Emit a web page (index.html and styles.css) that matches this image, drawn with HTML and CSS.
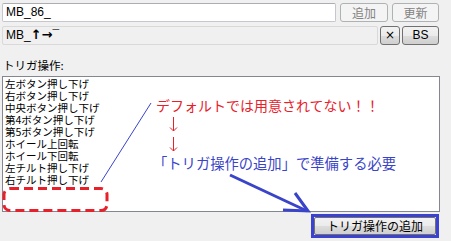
FILE: index.html
```html
<!DOCTYPE html>
<html lang="ja">
<head>
    <meta charset="UTF-8">
    <title>トリガ操作</title>
    <link rel="stylesheet" href="styles.css">
</head>
<body>
    <div class="window">
        <div class="row row-top">
            <div class="field field-main">MB_86_</div>
            <button class="btn btn-add" disabled>追加</button>
            <button class="btn btn-update" disabled>更新</button>
        </div>
        <div class="row row-keys">
            <div class="field field-keys">MB_<b>↑→</b>¯</div>
            <button class="btn btn-x">×</button>
            <button class="btn btn-bs">BS</button>
        </div>
        <div class="label">トリガ操作:</div>
        <ul class="list">
            <li>左ボタン押し下げ</li>
            <li>右ボタン押し下げ</li>
            <li>中央ボタン押し下げ</li>
            <li>第4ボタン押し下げ</li>
            <li>第5ボタン押し下げ</li>
            <li>ホイール上回転</li>
            <li>ホイール下回転</li>
            <li>左チルト押し下げ</li>
            <li>右チルト押し下げ</li>
        </ul>
        <div class="footer">
            <span class="highlight"><button class="btn btn-trigger">トリガ操作の追加</button></span>
        </div>

        <!-- annotations drawn over the dialog -->
        <div class="note note-red">デフォルトでは用意されてない！！</div>
        <div class="note note-blue">「トリガ操作の追加」で準備する必要</div>
        <svg class="marks" width="451" height="241" viewBox="0 0 451 241">
            <line x1="151" y1="103" x2="101" y2="182" stroke="#3a44c8" stroke-width="1"/>
            <path d="M173.5 117 V131 M170 127.5 L173.5 131 L177 127.5" stroke="#e8202a" fill="none"/>
            <path d="M173.5 137 V151 M170 147.5 L173.5 151 L177 147.5" stroke="#e8202a" fill="none"/>
            <rect x="4" y="188.5" width="103" height="22" rx="6" fill="none" stroke="#e8202a" stroke-width="3" stroke-dasharray="9 5"/>
            <line x1="230" y1="175" x2="307" y2="211" stroke="#3a44c8" stroke-width="3"/>
            <path d="M295 193 L308 211 L283 210" stroke="#3a44c8" stroke-width="3" fill="none"/>
        </svg>
    </div>
</body>
</html>
```
FILE: styles.css
```css
body {
    margin: 0;
    background: #f0f0f0;
    font-family: "Noto Sans CJK JP", "Liberation Sans", sans-serif;
    font-size: 12px;
    color: #000;
}
.window {
    position: relative;
    width: 451px;
    height: 241px;
    padding: 3px 0 0 2px;
    box-sizing: border-box;
}
.row {
    display: flex;
    height: 19px;
}
.row-top {
    gap: 4px;
}
.row-keys {
    margin-top: 4px;
    gap: 2px;
}
.field {
    box-sizing: border-box;
    height: 19px;
    border: 1px solid #c4c7cc;
    border-top-color: #abadb3;
    border-radius: 2px;
    background: #fff;
    padding: 0 3px;
    font-family: "Liberation Sans", "Noto Sans CJK JP", sans-serif;
    font-size: 12px;
    line-height: 17px;
}
.field-main {
    width: 334px;
}
.field-keys {
    width: 376px;
    background: #f0f0f0;
    border-color: #d9d9d9;
}
.field-keys b {
    font-family: "DejaVu Sans", sans-serif;
    font-size: 13px;
    line-height: 15px;
}
.btn {
    box-sizing: border-box;
    height: 19px;
    padding: 0;
    border: 1px solid #707070;
    border-radius: 3px;
    background: linear-gradient(#f2f2f2 0%, #ebebeb 50%, #dddddd 51%, #cfcfcf 100%);
    font-family: "Noto Sans CJK JP", sans-serif;
    font-size: 12px;
    line-height: 17px;
    color: #000;
}
.btn:disabled {
    background: #f4f4f4;
    border-color: #adb2b5;
    color: #838383;
}
.btn-add {
    width: 48px;
}
.btn-update {
    width: 47px;
}
.btn-x {
    width: 20px;
    font-family: "DejaVu Sans", sans-serif;
    font-size: 12px;
}
.btn-bs {
    width: 37px;
    font-family: "Liberation Sans", sans-serif;
}
.label {
    margin-top: 13px;
    height: 14px;
    line-height: 14px;
    padding-left: 1px;
    font-size: 11.5px;
}
.list {
    list-style: none;
    margin: 4px 0 0;
    padding: 1px 2px 0;
    box-sizing: border-box;
    width: 438px;
    height: 136px;
    background: #fff;
    border: 1px solid #828790;
}
.list li {
    height: 12px;
    line-height: 12px;
    font-size: 10.5px;
}
.footer {
    display: flex;
    justify-content: flex-end;
    width: 437px;
    margin-top: 2px;
}
.highlight {
    display: block;
    border: 3px solid #3b42cf;
}
.btn-trigger {
    display: block;
    width: 122px;
    height: 18px;
    border-color: #707070;
    border-radius: 2px;
    line-height: 16px;
}
.note {
    position: absolute;
    font-size: 14px;
    line-height: 16px;
    white-space: nowrap;
}
.note-red {
    left: 156px;
    top: 97px;
    color: #e8202a;
}
.note-blue {
    left: 153px;
    top: 155px;
    font-size: 14.3px;
    color: #3a44c8;
}
.marks {
    position: absolute;
    left: 0;
    top: 0;
    pointer-events: none;
}
```
